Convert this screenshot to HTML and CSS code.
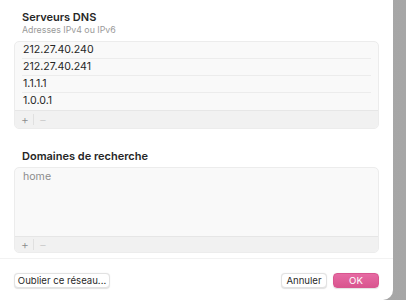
FILE: index.html
```html
<!DOCTYPE html>
<html lang="fr">
<head>
    <meta charset="UTF-8">
    <meta name="viewport" content="width=device-width, initial-scale=1.0">
    <title>DNS</title>
    <link rel="stylesheet" href="styles.css">
</head>
<body>
    <div class="sheet">
        <div class="section">
            <div class="section-title">Serveurs DNS</div>
            <div class="section-sub">Adresses IPv4 ou IPv6</div>
            <div class="list-box">
                <div class="list-rows">
                    <div class="list-row">212.27.40.240</div>
                    <div class="list-row">212.27.40.241</div>
                    <div class="list-row">1.1.1.1</div>
                    <div class="list-row">1.0.0.1</div>
                </div>
                <div class="list-tools">
                    <span class="tool">+</span>
                    <span class="tool-sep"></span>
                    <span class="tool tool-off">−</span>
                </div>
            </div>
        </div>

        <div class="section section-domains">
            <div class="section-title">Domaines de recherche</div>
            <div class="list-box">
                <div class="list-empty">home</div>
                <div class="list-tools">
                    <span class="tool">+</span>
                    <span class="tool-sep"></span>
                    <span class="tool tool-off">−</span>
                </div>
            </div>
        </div>

        <div class="footer">
            <button class="btn btn-wide">Oublier ce réseau...</button>
            <div class="footer-right">
                <button class="btn">Annuler</button>
                <button class="btn btn-primary">OK</button>
            </div>
        </div>
    </div>
</body>
</html>
```

FILE: styles.css
```css
:root {
    --text-color: #262626;
    --muted: #9a9a9a;
    --box-bg: #f9f9f9;
    --box-border: #ececec;
    --tools-bg: #f1f1f1;
    --accent: #e2609c;
}

html, body {
    margin: 0;
    height: 100%;
}

body {
    font-family: Inter, 'Liberation Sans', sans-serif;
    background: linear-gradient(to right, #b4b4b4, #a6a6a6);
    color: var(--text-color);
    overflow: hidden;
}

.sheet {
    width: 393px;
    height: 300px;
    background: #fff;
    border-bottom-right-radius: 10px;
    box-sizing: border-box;
    padding: 10px 14px 0 14px;
    display: flex;
    flex-direction: column;
}

.section-title {
    font-size: 11px;
    font-weight: 600;
    line-height: 14px;
    padding-left: 8px;
}

.section-sub {
    font-size: 8.8px;
    line-height: 11px;
    color: var(--muted);
    padding-left: 8px;
}

.list-box {
    margin-top: 6px;
    background: var(--box-bg);
    border: 1px solid var(--box-border);
    border-radius: 5px;
    overflow: hidden;
}

.list-rows {
    padding: 0 7px;
}

.list-row {
    height: 16px;
    line-height: 16px;
    font-size: 10.6px;
    padding-left: 1px;
    border-bottom: 1px solid #ececec;
}

.list-row:last-child {
    border-bottom: none;
    height: 17px;
}

.list-tools {
    height: 17px;
    background: var(--tools-bg);
    border-top: 1px solid #e6e6e6;
    display: flex;
    align-items: center;
    padding-left: 5px;
    font-size: 12px;
    font-weight: 300;
    color: #8a8a8a;
}

.tool {
    width: 10px;
    text-align: center;
    line-height: 17px;
}

.tool-off {
    color: #c8c8c8;
}

.tool-sep {
    width: 1px;
    height: 11px;
    background: #e0e0e0;
    margin: 0 4px 0 3px;
}

.section-domains {
    margin-top: 20px;
}

.section-domains .list-box {
    margin-top: 4px;
}

.section-domains .list-tools {
    height: 15px;
}

.list-empty {
    height: 68px;
    padding: 2px 8px;
    font-size: 10.6px;
    line-height: 14px;
    color: #8c8c8c;
    box-sizing: border-box;
}

.footer {
    margin: 5px -14px 0 -14px;
    border-top: 1px solid #f2f2f2;
    padding: 14px 14px 0 14px;
    display: flex;
    justify-content: space-between;
}

.footer-right {
    display: flex;
    gap: 6px;
}

.btn {
    font-family: Inter, 'Liberation Sans', sans-serif;
    font-size: 9.6px;
    height: 15px;
    line-height: 13px;
    width: 46px;
    padding: 0;
    background: #fff;
    color: #2a2a2a;
    border: 1px solid #e2e2e2;
    border-radius: 4px;
    box-shadow: 0 0.5px 1px rgba(0, 0, 0, 0.12);
}

.btn-wide {
    width: 96px;
}

.btn-primary {
    background: linear-gradient(#e66aa3, #d9558f);
    border-color: #d9558f;
    color: #fff;
}
```
